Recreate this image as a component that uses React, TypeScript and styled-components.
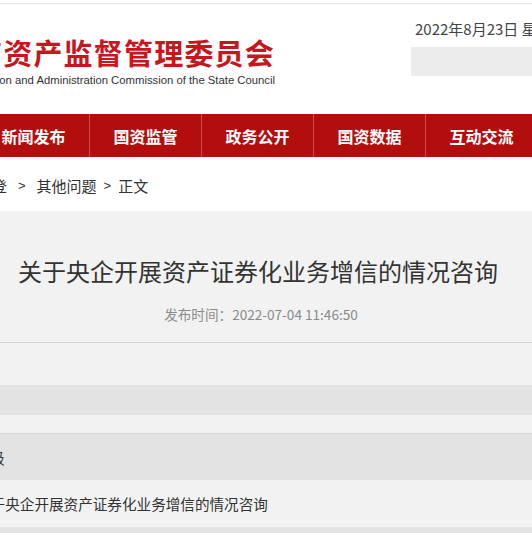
import styled, { createGlobalStyle } from "styled-components";

const GlobalStyle = createGlobalStyle`
  html, body {
    margin: 0;
    padding: 0;
    background: #fff;
    overflow: hidden;
  }
  body {
    font-family: "Noto Sans CJK SC", "Liberation Sans", sans-serif;
    color: #333;
  }
`;

const Viewport = styled.div`
  width: 532px;
  height: 533px;
  overflow: hidden;
`;

// the page is wider than the shot, its left part is cut off
const Page = styled.div`
  width: 900px;
  margin-left: -150px;
`;

const TopLine = styled.div`
  height: 3px;
  border-bottom: 1px solid #e6e6e6;
`;

const Header = styled.div`
  display: flex;
  height: 110px;
`;

const Logo = styled.div`
  width: 420px;
  margin-left: 5px;
  display: flex;
  flex-direction: column;
  align-items: flex-end;
  padding-top: 32px;

  h1 {
    margin: 0;
    font-size: 29px;
    line-height: 32px;
    font-weight: 700;
    letter-spacing: 1.2px;
    color: #c8161e;
    white-space: nowrap;
  }
  p {
    margin: 6px 0 0;
    font-family: "Liberation Sans", Arial, sans-serif;
    font-size: 11.3px;
    line-height: 12px;
    color: #333;
    white-space: nowrap;
  }
`;

const TopRight = styled.div`
  margin-left: 136px;
  padding-top: 15px;
  display: flex;
  flex-direction: column;

  .date {
    padding-left: 4px;
    font-size: 15px;
    line-height: 20px;
    color: #444;
    white-space: nowrap;
  }
`;

const SearchBox = styled.div`
  margin-top: 8px;
  width: 300px;
  height: 29px;
  background: #ececec;
`;

const Nav = styled.div`
  display: flex;
  height: 43px;
  padding-left: 128px;
  background: #b20e0e;
`;

const NavItem = styled.div`
  width: 111px;
  flex-shrink: 0;
  border-right: 1px solid #cf4b4b;
  display: flex;
  align-items: center;
  justify-content: center;
  color: #fff;
  font-size: 16px;
  font-weight: 700;
  white-space: nowrap;
`;

const Crumbs = styled.div`
  display: flex;
  align-items: center;
  height: 54px;
  padding-top: 2px;
  box-sizing: border-box;
  font-size: 15px;
  color: #333;
  white-space: nowrap;
`;

const CrumbLead = styled.span`
  width: 157px;
  overflow: hidden;
  text-align: right;
  direction: rtl;
`;

const Sep = styled.span<{ $gap: number }>`
  margin: 0 ${(p) => p.$gap}px;
  font-family: "Liberation Sans", sans-serif;
  font-size: 13px;
`;

const Content = styled.div`
  background: #f2f2f2;
`;

const ArticleHead = styled.div`
  width: 816px;
  padding: 44px 0 18px;
  text-align: center;
  border-bottom: 1px solid #d2d2d2;

  h2 {
    margin: 0;
    font-size: 24px;
    line-height: 32px;
    font-weight: 400;
    color: #333;
  }
  .time {
    margin-top: 17px;
    padding-left: 6px;
    font-size: 13.6px;
    line-height: 20px;
    color: #8a8a8a;
  }
`;

const Band = styled.div<{ $h: number; $dark?: boolean; $line?: boolean; $indent?: number }>`
  height: ${(p) => p.$h}px;
  background: ${(p) => (p.$dark ? "#e3e3e3" : "#f2f2f2")};
  border-top: ${(p) => (p.$line ? "1px solid #d6d6d6" : "none")};
  display: flex;
  align-items: center;
  padding-left: ${(p) => p.$indent ?? 140}px;
  font-size: 14.6px;
  color: #333;
  white-space: nowrap;
`;

const navItems = ["新闻发布", "国资监管", "政务公开", "国资数据", "互动交流"];

export default function App() {
  return (
    <>
      <GlobalStyle />
      <Viewport>
        <Page>
          <TopLine />
          <Header>
            <Logo>
              <h1>国务院国有资产监督管理委员会</h1>
              <p>State-owned Assets Supervision and Administration Commission of the State Council</p>
            </Logo>
            <TopRight>
              <span className="date">2022年8月23日 星期二</span>
              <SearchBox />
            </TopRight>
          </Header>
          <Nav>
            {navItems.map((t) => (
              <NavItem key={t}>{t}</NavItem>
            ))}
          </Nav>
          <Crumbs>
            <CrumbLead>互动登</CrumbLead>
            <Sep $gap={11}>&gt;</Sep>
            <span>其他问题</span>
            <Sep $gap={7}>&gt;</Sep>
            <span>正文</span>
          </Crumbs>
          <Content>
            <ArticleHead>
              <h2>关于央企开展资产证券化业务增信的情况咨询</h2>
              <div className="time">发布时间：2022-07-04 11:46:50</div>
            </ArticleHead>
            <Band $h={42} />
            <Band $h={30} $dark />
            <Band $h={18} />
            <Band $h={46} $dark $line>
              <span>级</span>
            </Band>
            <Band $h={47} $indent={126}>
              <span>关于央企开展资产证券化业务增信的情况咨询</span>
            </Band>
            <Band $h={40} $dark />
          </Content>
        </Page>
      </Viewport>
    </>
  );
}
